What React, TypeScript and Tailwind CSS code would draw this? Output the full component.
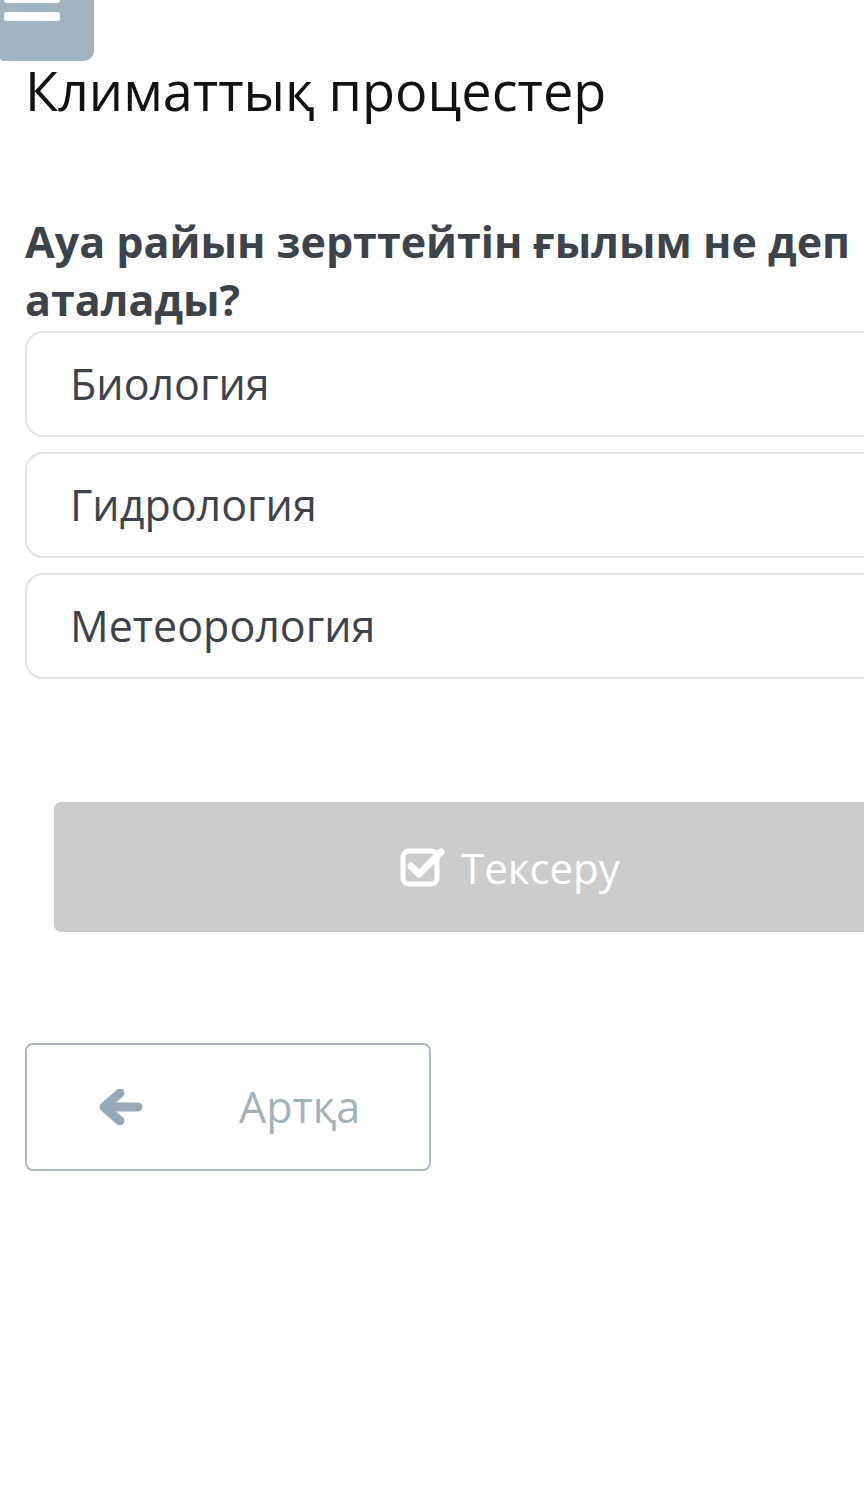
import React from "react";

export default function App() {
  const options = ["Биология", "Гидрология", "Метеорология"];
  return (
    <div
      className="relative w-[864px] h-[1508px] overflow-hidden bg-white"
      style={{ fontFamily: '"Open Sans", "Noto Sans", sans-serif' }}
    >
      <div className="absolute left-0 top-0 w-[94px] h-[61px] bg-[#a3b4c1] rounded-br-[10px] rounded-bl-[4px]">
        <div className="absolute left-[4px] top-[-3px] w-[56px] h-[6px] bg-white rounded-[3px]" />
        <div className="absolute left-[4px] top-[12px] w-[56px] h-[9px] bg-white rounded-[3px]" />
      </div>

      <div className="pt-[58px] pl-[25px] w-[1000px]">
        <h1 className="text-[54px] leading-[64px] text-[#111] font-normal">Климаттық процестер</h1>
        <h2 className="mt-[91px] w-[840px] text-[43px] leading-[58px] font-bold text-[#3d434a]">
          Ауа райын зерттейтін ғылым не деп аталады?
        </h2>
        <div className="mt-[2px] flex flex-col gap-[15px]">
          {options.map((o) => (
            <div
              key={o}
              className="h-[106px] border-2 border-[#e3e3e3] rounded-[18px] flex items-center pl-[43px] text-[43px] text-[#3d434a]"
            >
              {o}
            </div>
          ))}
        </div>
        <div className="mt-[123px] ml-[29px] h-[130px] bg-[#cccccc] rounded-[7px] flex items-center pl-[346px] text-white text-[42px]">
          <svg width="46" height="40" viewBox="0 0 46 40" className="mr-[15px]">
            <rect x="3" y="4" width="34" height="33" rx="6" fill="none" stroke="white" strokeWidth="5" />
            <path d="M11 19 L19 27 L41 5" fill="none" stroke="white" strokeWidth="7" strokeLinecap="round" strokeLinejoin="round" />
          </svg>
          <span>Тексеру</span>
        </div>
        <div className="mt-[111px] w-[406px] h-[128px] border-2 border-[#a9bac6] rounded-[8px] flex items-center">
          <svg width="46" height="36" viewBox="0 0 46 36" className="ml-[71px]">
            <path d="M22 4 L6 18 L22 32" fill="none" stroke="#98aab7" strokeWidth="9" strokeLinecap="round" strokeLinejoin="round" />
            <path d="M10 18 L40 18" fill="none" stroke="#98aab7" strokeWidth="9" strokeLinecap="round" />
          </svg>
          <span className="ml-[95px] text-[43px] text-[#a2b2bd]">Артқа</span>
        </div>
      </div>
    </div>
  );
}
